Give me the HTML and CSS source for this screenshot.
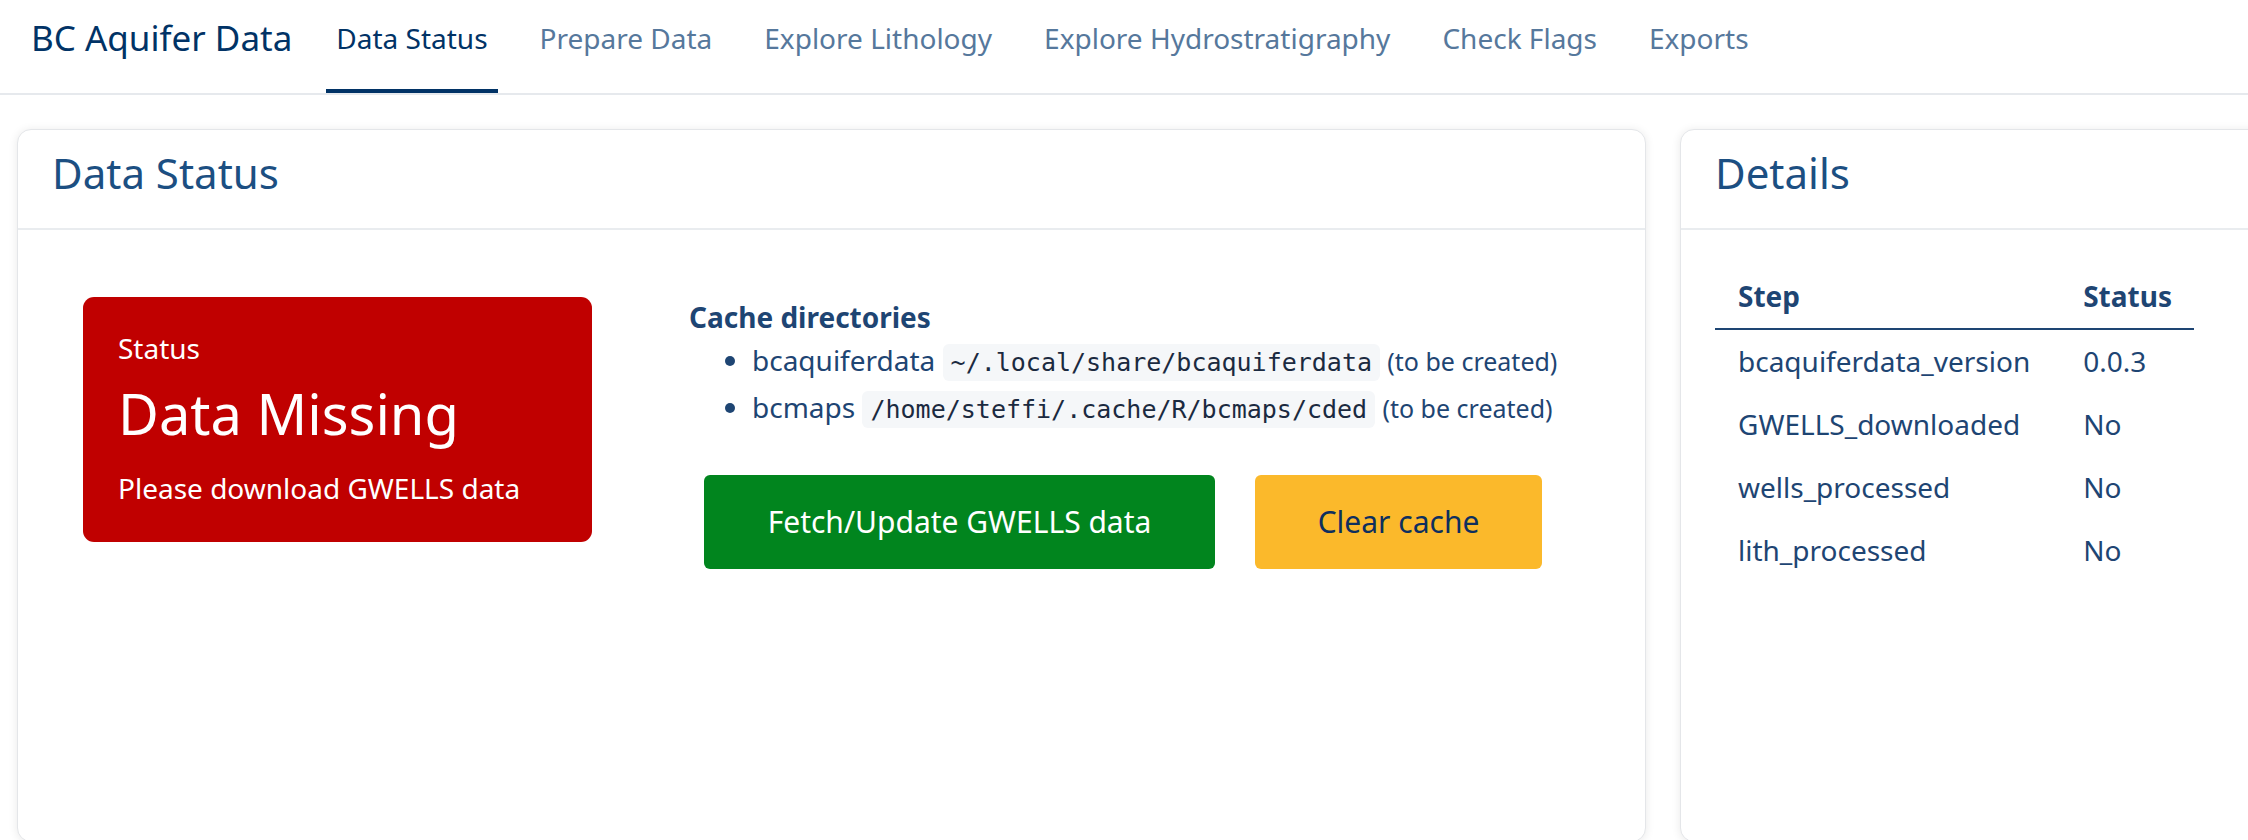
FILE: index.html
```html
<!DOCTYPE html>
<html lang="en">
<head>
<meta charset="utf-8">
<title>BC Aquifer Data</title>
<link rel="stylesheet" href="styles.css">
</head>
<body>
<nav class="navbar">
  <div class="brand">BC Aquifer Data</div>
  <ul class="nav">
    <li class="nav-link active">Data Status</li>
    <li class="nav-link">Prepare Data</li>
    <li class="nav-link">Explore Lithology</li>
    <li class="nav-link">Explore Hydrostratigraphy</li>
    <li class="nav-link">Check Flags</li>
    <li class="nav-link">Exports</li>
  </ul>
</nav>
<main class="page">
  <section class="card card-main">
    <header class="card-header"><h2 class="card-title">Data Status</h2></header>
    <div class="card-body status-body">
      <div class="value-box">
        <div class="vb-label">Status</div>
        <div class="vb-value">Data Missing</div>
        <div class="vb-note">Please download GWELLS data</div>
      </div>
      <div class="cache">
        <h5 class="cache-title">Cache directories</h5>
        <ul class="cache-list">
          <li>bcaquiferdata <code>~/.local/share/bcaquiferdata</code> <span class="note">(to be created)</span></li>
          <li>bcmaps <code>/home/steffi/.cache/R/bcmaps/cded</code> <span class="note">(to be created)</span></li>
        </ul>
        <div class="actions">
          <button class="btn btn-success">Fetch/Update GWELLS data</button>
          <button class="btn btn-warning">Clear cache</button>
        </div>
      </div>
    </div>
  </section>
  <section class="card card-side">
    <header class="card-header"><h2 class="card-title">Details</h2></header>
    <div class="card-body">
      <table class="details">
        <thead>
          <tr><th>Step</th><th>Status</th></tr>
        </thead>
        <tbody>
          <tr><td>bcaquiferdata_version</td><td>0.0.3</td></tr>
          <tr><td>GWELLS_downloaded</td><td>No</td></tr>
          <tr><td>wells_processed</td><td>No</td></tr>
          <tr><td>lith_processed</td><td>No</td></tr>
        </tbody>
      </table>
    </div>
  </section>
</main>
</body>
</html>
```

FILE: styles.css
```css
html, body {
  margin: 0;
  padding: 0;
  background: #ffffff;
  overflow: hidden;
}
body {
  font-family: "Noto Sans", "Open Sans", sans-serif;
  font-size: 28px;
  line-height: 1.5;
  color: #1e4573;
  width: 2248px;
  height: 840px;
}
.navbar {
  display: flex;
  align-items: stretch;
  height: 93px;
  border-bottom: 2px solid #e6e9ed;
  padding-left: 31px;
  box-sizing: content-box;
}
.brand {
  font-size: 35px;
  line-height: 42px;
  padding-top: 17px;
  color: #013366;
  margin-right: 34px;
}
.nav {
  display: flex;
  list-style: none;
  margin: 0;
  padding: 0;
  gap: 32px;
}
.nav-link {
  padding: 17px 10px 0;
  line-height: 42px;
  color: #56789c;
  border-bottom: 4px solid transparent;
  box-sizing: border-box;
  height: 93px;
}
.nav-link.active {
  color: #013366;
  border-bottom-color: #013366;
}
.page {
  display: flex;
  gap: 34px;
  padding: 34px 0 0 17px;
  width: 2400px;
}
.card {
  background: #fff;
  border: 1px solid #e4e6e9;
  border-radius: 14px;
  box-shadow: 0 1px 10px rgba(0, 0, 0, 0.09);
  height: 713px;
  box-sizing: border-box;
  display: flex;
  flex-direction: column;
}
.card-main { width: 1629px; }
.card-side { width: 640px; }
.card-header {
  height: 100px;
  box-sizing: border-box;
  border-bottom: 2px solid #e9ecef;
  padding: 0 34px;
  display: flex;
  align-items: center;
}
.card-title {
  margin: 0;
  font-size: 42px;
  font-weight: 400;
  line-height: 1.2;
  color: #1c4f82;
  padding-bottom: 12px;
}
.card-body {
  padding: 34px;
}
.status-body {
  display: flex;
  align-items: flex-start;
  gap: 97px;
  padding: 67px 34px 34px 65px;
}
.value-box {
  width: 509px;
  height: 245px;
  box-sizing: border-box;
  background: #c00000;
  color: #fff;
  border-radius: 11px;
  padding: 30px 35px;
  flex: none;
}
.vb-label {
  font-size: 28px;
  line-height: 42px;
}
.vb-value {
  font-size: 56px;
  line-height: 1.2;
  margin-top: 11px;
}
.vb-note {
  font-size: 28px;
  line-height: 42px;
  margin-top: 20px;
}
.cache-title {
  margin: -1px 0 0;
  font-size: 28px;
  font-weight: 700;
  line-height: 42px;
  color: #1e4573;
}
.cache-list {
  margin: 0;
  padding-left: 63px;
  line-height: 45px;
}
code {
  font-family: "DejaVu Sans Mono", "Liberation Mono", monospace;
  font-size: 25px;
  background: #f5f7f9;
  color: #1b2a40;
  border-radius: 6px;
  padding: 4px 8px;
}
.note {
  font-size: 25px;
}
.actions {
  display: flex;
  gap: 40px;
  margin-top: 43px;
  padding-left: 15px;
}
.btn {
  font-family: inherit;
  font-size: 30px;
  line-height: 42px;
  padding: 26px 40px;
  border: none;
  border-radius: 6px;
  cursor: pointer;
}
.btn-success {
  background: #01851e;
  color: #fff;
  width: 511px;
}
.btn-warning {
  background: #fbb92b;
  color: #0e2f5e;
  width: 287px;
}
.details {
  border-collapse: collapse;
  margin-top: 1px;
}
.details th, .details td {
  text-align: left;
  padding: 10px 22px 11px 23px;
  line-height: 42px;
}
.details th {
  font-weight: 700;
  border-bottom: 2px solid #1e4573;
}
.details td:first-child { padding-right: 30px; }
```
